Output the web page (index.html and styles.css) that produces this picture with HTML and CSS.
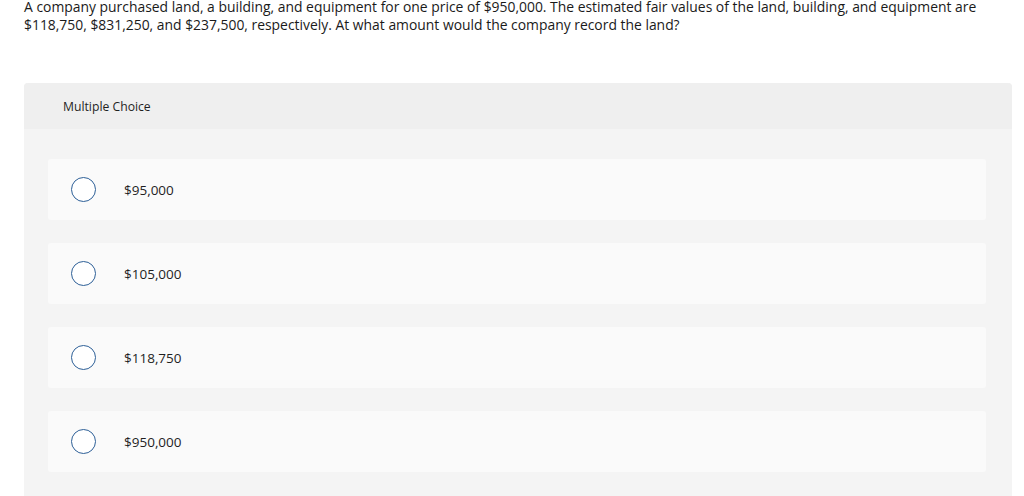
FILE: index.html
```html
<!DOCTYPE html>
<html>
<head>
<meta charset="utf-8">
<link rel="stylesheet" href="styles.css">
</head>
<body>
<p class="question">A company purchased land, a building, and equipment for one price of $950,000. The estimated fair values of the land, building, and equipment are $118,750, $831,250, and $237,500, respectively. At what amount would the company record the land?</p>
<div class="panel">
  <div class="panel-header">Multiple Choice</div>
  <div class="panel-body">
    <div class="option"><span class="radio"></span><span class="label">$95,000</span></div>
    <div class="option"><span class="radio"></span><span class="label">$105,000</span></div>
    <div class="option"><span class="radio"></span><span class="label">$118,750</span></div>
    <div class="option"><span class="radio"></span><span class="label">$950,000</span></div>
  </div>
</div>
</body>
</html>
```
FILE: styles.css
```css
html, body {
  margin: 0;
  padding: 0;
  background: #ffffff;
  font-family: "Open Sans", "Lato", sans-serif;
  color: #1f1f1f;
  overflow: hidden;
}
.question {
  margin: -2px 0 0 0;
  padding: 0 24px;
  font-size: 13.9px;
  line-height: 18px;
  color: #1a1a1a;
}
.panel {
  margin: 49px 12px 0 24px;
  background: #f4f4f4;
  border-radius: 4px 4px 0 0;
  overflow: hidden;
}
.panel-header {
  height: 46px;
  display: flex;
  align-items: center;
  padding-left: 39px;
  background: #efefef;
  font-size: 12.2px;
  color: #1f1f1f;
}
.panel-body {
  display: flex;
  flex-direction: column;
  gap: 23px;
  padding: 30px 26px 24px 24px;
}
.option {
  height: 61px;
  display: flex;
  align-items: center;
  padding-left: 23px;
  background: #fafafa;
  border-radius: 3px;
}
.radio {
  width: 23px;
  height: 23px;
  border: 1.5px solid #2d5f97;
  border-radius: 50%;
  background: #ffffff;
  flex-shrink: 0;
}
.label {
  margin-left: 28px;
  font-size: 13.5px;
  color: #1f1f1f;
}
```
